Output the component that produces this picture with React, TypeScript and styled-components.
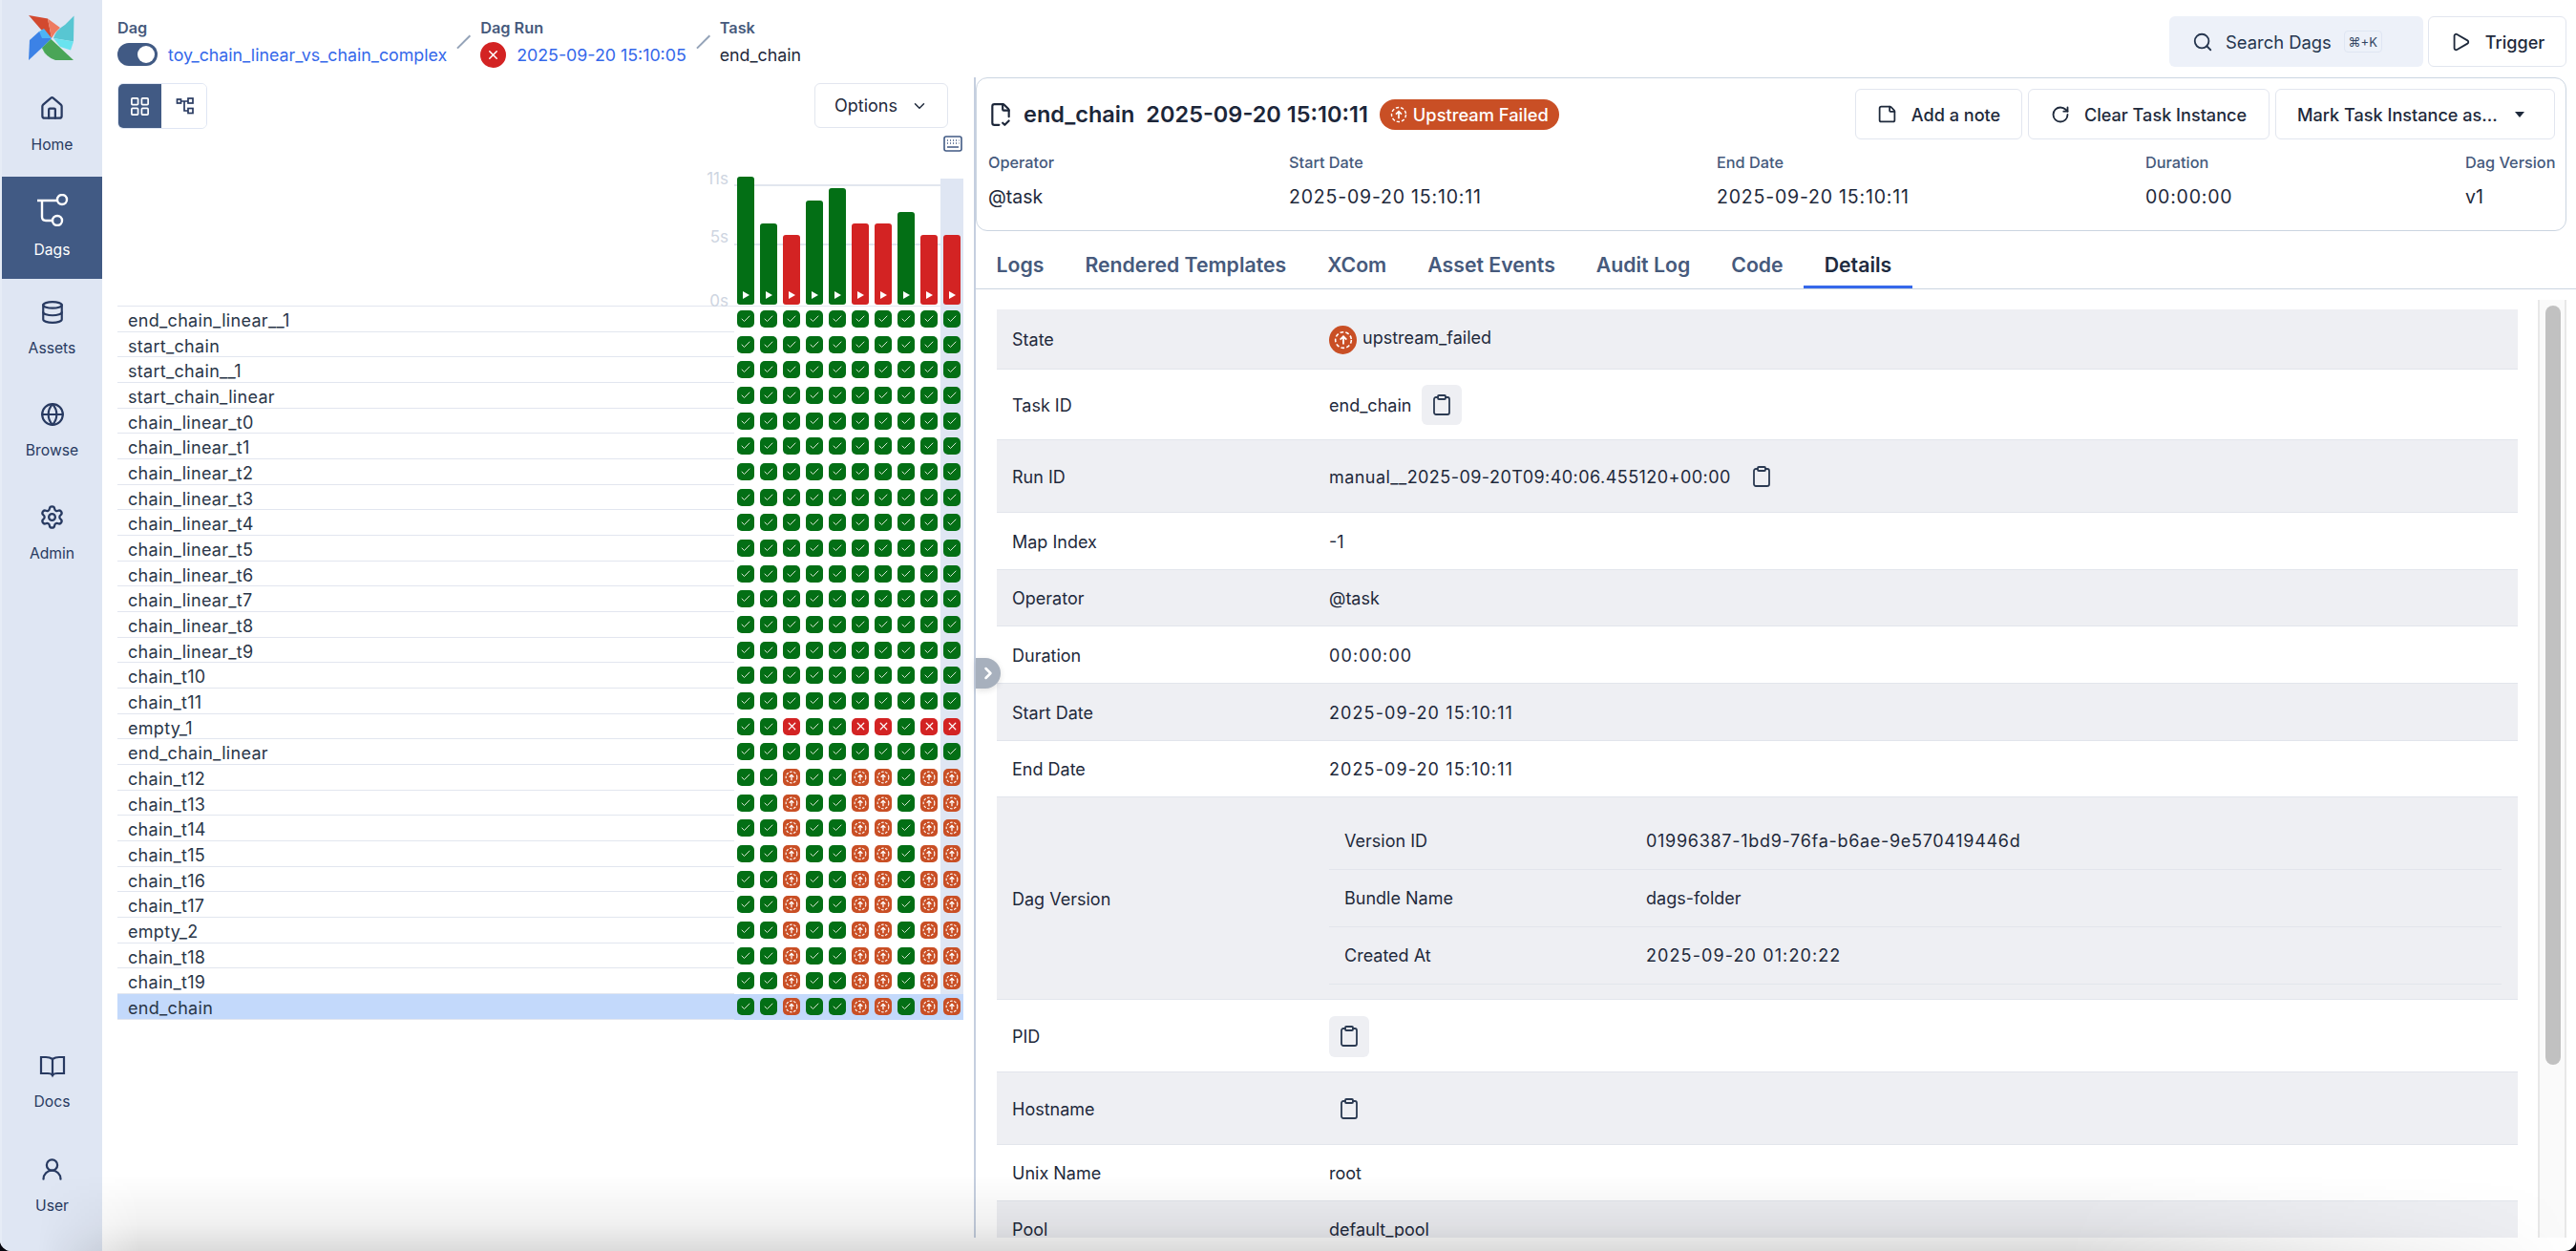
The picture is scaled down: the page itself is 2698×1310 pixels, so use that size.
import React from "react";
import styled, { createGlobalStyle } from "styled-components";
import {
  House, Database, Globe, Settings, UserRound, LayoutGrid, Search, Play, StickyNote,
  RotateCw, Clipboard, ChevronDown, ChevronRight, FileCheck2, X, Check,
} from "lucide-react";

const Global = createGlobalStyle`
  html, body { margin: 0; padding: 0; background: #07070f; }
  body { font-family: Inter, "Noto Sans", sans-serif; color: #1e293b; }
  * { box-sizing: border-box; }
`;

const Page = styled.div`
  position: relative; width: 2698px; height: 1310px; display: flex; overflow: hidden;
  background: #fff; border-radius: 0 0 12px 12px; font-size: 18px;
`;
const BottomShade = styled.div`
  position: absolute; left: 40px; right: 0; bottom: 0; height: 80px; pointer-events: none;
  background: linear-gradient(to top, rgba(0,0,0,.14), rgba(0,0,0,.06) 35%, rgba(0,0,0,0));
  -webkit-mask-image: linear-gradient(to right, transparent 0, #000 4%, #000 80%, transparent 100%);
  mask-image: linear-gradient(to right, transparent 0, #000 4%, #000 80%, transparent 100%);
`;

/* sidebar */
const Sidebar = styled.nav`
  width: 107px; flex: none; display: flex; flex-direction: column; background: #dfe6f3;
  border-left: 2px solid #e6ecf6; height: 100%;
`;
const LogoBox = styled.div`height: 78px; padding: 16px 0 0 28px;`;
const NavItem = styled.div<{ $active?: boolean }>`
  height: 107px; display: flex; flex-direction: column; align-items: center; justify-content: center; gap: 16px;
  padding-bottom: 3px;
  background: ${p => (p.$active ? "#415a84" : "transparent")};
  color: ${p => (p.$active ? "#fff" : "#283a61")};
  font-size: 15.7px; line-height: 18px;
`;
const NavSpacer = styled.div`flex: 1;`;
const SideEnd = styled.div`height: 14px;`;

/* main */
const Main = styled.div`flex: 1; min-width: 0; display: flex; flex-direction: column;`;
const Header = styled.header`
  height: 81px; flex: none; display: flex; align-items: flex-start; padding: 17px 10px 0 16px;
`;
const Crumbs = styled.div`flex: 1; display: flex; padding-top: 3px;`;
const Crumb = styled.div`display: flex; flex-direction: column; gap: 7px;`;
const CrumbLabel = styled.div`font-size: 16.3px; line-height: 18px; font-weight: 600; color: #465a7c;`;
const CrumbValue = styled.div`display: flex; align-items: center; gap: 11px; height: 24px; font-size: 17.8px; white-space: nowrap;`;
const CrumbLink = styled.span`color: #3568ea;`;
const Slash = styled.div`
  width: 19px; height: 1.5px; background: #94a3b8; transform: rotate(-45deg);
  margin: 23px 8px 0;
`;
const Toggle = styled.div`
  width: 42px; height: 24px; border-radius: 12px; background: #415a84; padding: 3px 3px 3px 21px;
`;
const Knob = styled.div`width: 18px; height: 18px; border-radius: 50%; background: #fff;`;
const FailDot = styled.div`
  width: 27px; height: 27px; border-radius: 50%; background: #d32323; color: #fff;
  display: flex; align-items: center; justify-content: center;
`;
const HeaderActions = styled.div`display: flex; gap: 5px;`;
const SearchBox = styled.div`
  width: 266px; height: 53px; background: #edf1f9; border-radius: 6px; display: flex; align-items: center;
  padding-left: 24px; gap: 13px; color: #26364f; font-size: 18.4px;
`;
const Kbd = styled.span`
  height: 23px; width: 40px; border: 1px solid #dfe6f3; border-radius: 4px; font-size: 13px;
  display: flex; align-items: center; justify-content: center; color: #334663;
`;
const Button = styled.button<{ $w?: number }>`
  height: 53px; width: ${p => (p.$w ? `${p.$w}px` : "auto")}; border: 1.5px solid #e2e6ef; border-radius: 6px; background: #fff;
  display: flex; align-items: center; justify-content: center; gap: 15px; padding: 0;
  font: 500 18.1px Inter, sans-serif; color: #1e293b;
`;

const Split = styled.div`flex: 1; min-height: 0; display: flex;`;
const LeftPane = styled.section`
  width: 913px; flex: none; padding: 6px 11px 0 16px; display: flex; flex-direction: column;
`;
const ToolRow = styled.div`display: flex; justify-content: space-between; height: 48px; padding-right: 16px;`;
const ViewToggle = styled.div`
  display: flex; width: 94px; height: 48px; border: 1.5px solid #dfe6f3; border-radius: 6px; overflow: hidden;
`;
const ViewBtn = styled.div<{ $on?: boolean }>`
  flex: 1; display: flex; align-items: center; justify-content: center;
  background: ${p => (p.$on ? "#415a84" : "#fff")}; color: ${p => (p.$on ? "#fff" : "#283a61")};
  border-right: ${p => (p.$on ? "2px solid #fff" : "none")};
`;
const OptionsBtn = styled(Button)`width: 140px; height: 47px; gap: 14px; font-weight: 400; font-size: 18px;`;
const KeyRow = styled.div`height: 27px; display: flex; justify-content: flex-end; padding: 7px 1px 0 0; color: #415a84;`;

const Chart = styled.div`
  position: relative; height: 159px; display: flex; justify-content: flex-end; align-items: flex-end;
  border-bottom: 1.5px solid #e2e6ef;
`;
const GridLine = styled.div<{ $y: number }>`
  position: absolute; left: 646px; width: 216px; top: ${p => p.$y}px; height: 1.5px; background: #e2e6ef;
`;
const AxisLabel = styled.div<{ $y: number }>`
  position: absolute; right: 246px; top: ${p => p.$y}px; color: #ced5e1; font-size: 17px; line-height: 20px;
`;
const BarCol = styled.div<{ $hl?: boolean }>`
  position: relative; width: 24px; height: 133px; padding: 0 3px 1px; display: flex; align-items: flex-end;
  background: ${p => (p.$hl ? "#dfe6f3" : "transparent")};
`;
const Bar = styled.div<{ $fail?: boolean; $h: number }>`
  width: 18px; flex: none; height: ${p => p.$h}px; border-radius: 3px; background: ${p => (p.$fail ? "#d32323" : "#036f15")};
  display: flex; align-items: flex-end; justify-content: center; padding-bottom: 6px;
`;
const PlayMark = styled.div`
  width: 0; height: 0; border-left: 7px solid #fff; border-top: 4px solid transparent; border-bottom: 4px solid transparent;
`;

const Tree = styled.div`display: flex; flex-direction: column;`;
const Row = styled.div<{ $sel?: boolean }>`
  height: 26.68px; display: flex; align-items: stretch;
  background: ${p => (p.$sel ? "#c3d9fb" : "transparent")};
`;
const RowName = styled.div`
  flex: 1; padding-left: 11px; font-size: 18px; line-height: 30px; letter-spacing: 0.3px; white-space: nowrap;
  color: #2a3648; border-bottom: 1.5px solid #e2e6ef; overflow: hidden;
`;
const Cell = styled.div<{ $hl?: boolean }>`
  width: 24px; flex: none; padding: 4px 3px 0; background: ${p => (p.$hl ? "#dfe6f3" : "transparent")};
`;
const SelCell = styled(Cell)`background: transparent;`;
const Square = styled.div<{ $s: string }>`
  width: 18px; height: 18px; border-radius: 5px; display: flex; align-items: center; justify-content: center;
  color: ${p => (p.$s === "ok" ? "#d5e7d6" : "#fff")};
  background: ${p => (p.$s === "ok" ? "#036f15" : p.$s === "fail" ? "#d32323" : "#c94f25")};
`;

const RightPane = styled.section`
  position: relative; flex: 1; min-width: 0; height: 1215px; border-left: 2px solid #c5cfdf; padding-right: 10px;
  display: flex; flex-direction: column;
`;
const Handle = styled.div`
  position: absolute; left: 0; top: 608px; width: 26px; height: 32px; background: #a7b0bd; border-radius: 0 16px 16px 0;
  color: #fff; display: flex; align-items: center; justify-content: center; box-shadow: 0 2px 6px rgba(0,0,0,.12);
`;
const Card = styled.div`
  height: 161px; flex: none; border: 1.5px solid #cbd5e1; border-radius: 12px; padding: 11px 11px 0 12px;
`;
const CardTop = styled.div`display: flex; align-items: center; height: 53px;`;
const Title = styled.div`
  display: flex; align-items: center; gap: 11px; font-size: 23.5px; font-weight: 600; color: #1c2639; white-space: nowrap;
`;
const TitleDate = styled.span`margin-left: 1px;`;
const Badge = styled.span`
  height: 32px; padding: 0 11px; margin-left: 1px; border-radius: 16px; background: #c94f25; color: #fff;
  display: inline-flex; align-items: center; gap: 6px; font-size: 18.3px; font-weight: 500;
`;
const CardActions = styled.div`margin-left: auto; display: flex; gap: 6px;`;
const MarkBtn = styled(Button)`gap: 18px; justify-content: flex-start; padding-left: 22px;`;
const Caret = styled.span`
  width: 0; height: 0; border-top: 6px solid #1e293b; border-left: 5.5px solid transparent; border-right: 5.5px solid transparent;
`;
const Meta = styled.div`
  display: grid; grid-template-columns: 315px 448px 449px 335px auto; margin-top: 15px;
`;
const MetaItem = styled.div`display: flex; flex-direction: column; gap: 16px;`;
const MetaLabel = styled.div`font-size: 16.3px; line-height: 18px; font-weight: 500; color: #465a7c; white-space: nowrap;`;
const MetaValue = styled.div<{ $num?: boolean }>`
  font-size: 19.5px; line-height: 22px; color: #1e293b; white-space: nowrap;
  letter-spacing: ${p => (p.$num ? "0.8px" : "0")};
`;

const Tabs = styled.div`
  height: 61px; flex: none; display: flex; border-bottom: 1.5px solid #cbd5e1; margin-right: -10px;
`;
const Tab = styled.div<{ $on?: boolean }>`
  padding: 22px 21.5px 0; font-size: 21.25px; line-height: 26px; font-weight: 600; white-space: nowrap;
  color: ${p => (p.$on ? "#1e2b40" : "#465a7c")};
  box-shadow: ${p => (p.$on ? "inset 0 -3px 0 #3568ea" : "none")};
`;

const Body = styled.div`flex: 1; min-height: 0; display: flex; overflow: hidden; margin-right: -10px; padding: 21px 0 0 22px;`;
const Table = styled.div`width: 1593px; flex: none;`;
const TRow = styled.div<{ $h: number; $odd?: boolean }>`
  height: ${p => p.$h}px; display: flex; align-items: center; padding: 1.5px 0 0 16px;
  background: ${p => (p.$odd ? "#eeeff3" : "#fff")}; border-bottom: 1.5px solid #e2e5ec;
`;
const TLabel = styled.div`width: 332px; flex: none;`;
const TValue = styled.div`flex: 1; display: flex; align-items: center; min-width: 0; white-space: nowrap;`;
const Spaced = styled.span<{ $ls: number }>`letter-spacing: ${p => p.$ls}px;`;
const StateDot = styled.span`
  width: 29px; height: 30px; border-radius: 50%; background: #c94f25; color: #fff; margin-right: 6px;
  display: inline-flex; align-items: center; justify-content: center;
`;
const StateText = styled.span`position: relative; top: -2px;`;
const CopyBtn = styled.div<{ $fill?: boolean; $tall?: boolean }>`
  width: 42px; height: ${p => (p.$tall ? 43 : 42)}px; border-radius: 6px; color: #2b3a52;
  display: flex; align-items: center; justify-content: center; margin-left: 11px;
  background: ${p => (p.$fill ? "#eeeff3" : "transparent")};
`;
const BareCopyBtn = styled(CopyBtn)`margin-left: 0;`;
const Nested = styled.div`width: 1228px;`;
const NRow = styled.div`
  height: 60px; display: flex; align-items: center; padding-left: 16px; border-bottom: 1.5px solid #e2e5ec;
`;
const NLabel = styled.div`width: 316px; flex: none;`;
const Track = styled.div`
  width: 30px; margin-left: 21px; flex: none; height: calc(100% + 10px); margin-top: -10px;
  background: #fafafa; border-left: 2px solid #e8e8e8; border-right: 2px solid #e8e8e8; padding: 6px 5px 0 6px;
`;
const Thumb = styled.div`width: 16px; height: 795px; border-radius: 8px; background: #c1c1c1;`;

/* icons */
const Logo = () => (
  <svg width="48" height="48" viewBox="0 0 48 48">
    <path d="M0 0L20 3.5L24 24L13 15Z" fill="#d2492f" />
    <path d="M20 3.5L33 13Q27 18 24 24Z" fill="#ee7a60" />
    <path d="M47.5 0.5L47 27.5L26 24Q28 16 38 10Z" fill="#58c6d2" />
    <path d="M47 27.5L44 36.5L33 33L26 24Z" fill="#69e3ef" />
    <path d="M47 47L28 47Q18 44 14 34L23.5 25Z" fill="#4aa557" />
    <path d="M23.5 25L14 34L18 42L11 24Z" fill="#5ac86b" />
    <path d="M0 47L1 26L11 17L24 24L14 34Z" fill="#3c82e6" />
    <path d="M11 17L16 14L24 24L14 24Z" fill="#4db3f6" />
  </svg>
);
const DagsIcon = () => (
  <svg width="34" height="34" viewBox="0 0 34 34" fill="none" stroke="currentColor" strokeWidth="2.4">
    <circle cx="27" cy="6" r="5" />
    <circle cx="22" cy="28" r="5" />
    <path d="M1 7H22M6 7V24Q6 28 10 28H17" />
  </svg>
);
const BookIcon = () => (
  <svg width="28" height="24" viewBox="0 0 28 24" fill="none" stroke="currentColor" strokeWidth="2.2">
    <path d="M14 4Q11 2 7 2H2V19H9Q13 19 14 21Q15 19 19 19H26V2H21Q17 2 14 4ZM14 4V22" />
  </svg>
);
const GraphIcon = () => (
  <svg width="20" height="18" viewBox="0 0 20 18" fill="none" stroke="currentColor" strokeWidth="1.7">
    <rect x="1.5" y="2" width="4" height="4" />
    <rect x="13" y="1" width="5" height="5" />
    <rect x="13" y="11.5" width="5" height="5" />
    <path d="M5.5 4H13M9 4V14H13" />
  </svg>
);
const KeyboardIcon = () => (
  <svg width="20" height="17" viewBox="0 0 20 17" fill="none">
    <rect x="1" y="1" width="18" height="15" rx="2" stroke="currentColor" strokeWidth="1.6" />
    <path d="M4 5h1M7 5h1M10 5h1M13 5h1M16 5h.5M4 8h1M7 8h1M10 8h1M13 8h1M16 8h.5M4 12h12" stroke="currentColor" strokeWidth="1.5" />
  </svg>
);
const UpstreamIcon = ({ size }: { size: number }) => (
  <svg width={size} height={size} viewBox="0 0 24 24" fill="none" stroke="currentColor">
    <circle cx="12" cy="12" r="10" strokeWidth="1.9" strokeDasharray="4.5 2.6" />
    <path d="M12 17.5V8M8 11.5L12 7.5L16 11.5" strokeWidth="2.2" />
  </svg>
);

const names = [
  "end_chain_linear__1", "start_chain", "start_chain__1", "start_chain_linear",
  "chain_linear_t0", "chain_linear_t1", "chain_linear_t2", "chain_linear_t3", "chain_linear_t4",
  "chain_linear_t5", "chain_linear_t6", "chain_linear_t7", "chain_linear_t8", "chain_linear_t9",
  "chain_t10", "chain_t11", "empty_1", "end_chain_linear", "chain_t12", "chain_t13", "chain_t14",
  "chain_t15", "chain_t16", "chain_t17", "empty_2", "chain_t18", "chain_t19", "end_chain",
];
const failCols = [2, 5, 6, 8, 9];
const barH = [134, 85, 73, 109, 122, 85, 85, 97, 73, 73];
const cols = barH.map((_, i) => i);

const statusOf = (name: string, rowIdx: number, col: number) => {
  if (!failCols.includes(col)) return "ok";
  if (name === "empty_1") return "fail";
  return rowIdx > 17 ? "up" : "ok";
};

const StatusIcon = ({ s }: { s: string }) =>
  s === "ok" ? <Check size={12} strokeWidth={2} /> : s === "fail" ? <X size={13} strokeWidth={2.2} /> : <UpstreamIcon size={14} />;

const CopyIcon = () => <Clipboard size={24} strokeWidth={1.8} />;

export default function App() {
  return (
    <Page>
      <Global />
      <Sidebar>
        <LogoBox><Logo /></LogoBox>
        <NavItem><House size={27} strokeWidth={2} /><span>Home</span></NavItem>
        <NavItem $active><DagsIcon /><span>Dags</span></NavItem>
        <NavItem><Database size={26} strokeWidth={2} /><span>Assets</span></NavItem>
        <NavItem><Globe size={26} strokeWidth={2} /><span>Browse</span></NavItem>
        <NavItem><Settings size={27} strokeWidth={2} /><span>Admin</span></NavItem>
        <NavSpacer />
        <NavItem><BookIcon /><span>Docs</span></NavItem>
        <NavItem><UserRound size={27} strokeWidth={2} /><span>User</span></NavItem>
        <SideEnd />
      </Sidebar>
      <Main>
        <Header>
          <Crumbs>
            <Crumb>
              <CrumbLabel>Dag</CrumbLabel>
              <CrumbValue><Toggle><Knob /></Toggle><CrumbLink>toy_chain_linear_vs_chain_complex</CrumbLink></CrumbValue>
            </Crumb>
            <Slash />
            <Crumb>
              <CrumbLabel>Dag Run</CrumbLabel>
              <CrumbValue><FailDot><X size={15} strokeWidth={2.4} /></FailDot><CrumbLink>2025-09-20 15:10:05</CrumbLink></CrumbValue>
            </Crumb>
            <Slash />
            <Crumb>
              <CrumbLabel>Task</CrumbLabel>
              <CrumbValue>end_chain</CrumbValue>
            </Crumb>
          </Crumbs>
          <HeaderActions>
            <SearchBox><Search size={22} strokeWidth={2} /><span>Search Dags</span><Kbd>⌘+K</Kbd></SearchBox>
            <Button $w={145}><Play size={22} strokeWidth={2} />Trigger</Button>
          </HeaderActions>
        </Header>
        <Split>
          <LeftPane>
            <ToolRow>
              <ViewToggle>
                <ViewBtn $on><LayoutGrid size={23} strokeWidth={1.8} /></ViewBtn>
                <ViewBtn><GraphIcon /></ViewBtn>
              </ViewToggle>
              <OptionsBtn>Options<ChevronDown size={18} strokeWidth={2} /></OptionsBtn>
            </ToolRow>
            <KeyRow><KeyboardIcon /></KeyRow>
            <Chart>
              <AxisLabel $y={15}>11s</AxisLabel>
              <AxisLabel $y={76}>5s</AxisLabel>
              <AxisLabel $y={143}>0s</AxisLabel>
              <GridLine $y={31} />
              <GridLine $y={93} />
              {cols.map(i => (
                <BarCol key={i} $hl={i === 9}>
                  <Bar $fail={failCols.includes(i)} $h={barH[i]}><PlayMark /></Bar>
                </BarCol>
              ))}
            </Chart>
            <Tree>
              {names.map((n, r) => {
                const sel = n === "end_chain";
                return (
                  <Row key={n} $sel={sel}>
                    <RowName>{n}</RowName>
                    {cols.map(c => {
                      const s = statusOf(n, r, c);
                      const C = sel ? SelCell : Cell;
                      return (
                        <C key={c} $hl={c === 9}>
                          <Square $s={s}><StatusIcon s={s} /></Square>
                        </C>
                      );
                    })}
                  </Row>
                );
              })}
            </Tree>
          </LeftPane>
          <RightPane>
            <Handle><ChevronRight size={20} strokeWidth={3} /></Handle>
            <Card>
              <CardTop>
                <Title>
                  <FileCheck2 size={26} strokeWidth={2} />
                  <span>end_chain</span>
                  <TitleDate>2025-09-20 15:10:11</TitleDate>
                  <Badge><UpstreamIcon size={18} />Upstream Failed</Badge>
                </Title>
                <CardActions>
                  <Button $w={175}><StickyNote size={21} strokeWidth={2} />Add a note</Button>
                  <Button $w={253}><RotateCw size={20} strokeWidth={2.2} />Clear Task Instance</Button>
                  <MarkBtn $w={293}>Mark Task Instance as...<Caret /></MarkBtn>
                </CardActions>
              </CardTop>
              <Meta>
                <MetaItem><MetaLabel>Operator</MetaLabel><MetaValue>@task</MetaValue></MetaItem>
                <MetaItem><MetaLabel>Start Date</MetaLabel><MetaValue $num>2025-09-20 15:10:11</MetaValue></MetaItem>
                <MetaItem><MetaLabel>End Date</MetaLabel><MetaValue $num>2025-09-20 15:10:11</MetaValue></MetaItem>
                <MetaItem><MetaLabel>Duration</MetaLabel><MetaValue $num>00:00:00</MetaValue></MetaItem>
                <MetaItem><MetaLabel>Dag Version</MetaLabel><MetaValue>v1</MetaValue></MetaItem>
              </Meta>
            </Card>
            <Tabs>
              <Tab>Logs</Tab>
              <Tab>Rendered Templates</Tab>
              <Tab>XCom</Tab>
              <Tab>Asset Events</Tab>
              <Tab>Audit Log</Tab>
              <Tab>Code</Tab>
              <Tab $on>Details</Tab>
            </Tabs>
            <Body>
              <Table>
                <TRow $h={63} $odd><TLabel>State</TLabel><TValue><StateDot><UpstreamIcon size={20} /></StateDot><StateText>upstream_failed</StateText></TValue></TRow>
                <TRow $h={74}><TLabel>Task ID</TLabel><TValue>end_chain<CopyBtn $fill><CopyIcon /></CopyBtn></TValue></TRow>
                <TRow $h={76} $odd><TLabel>Run ID</TLabel><TValue><Spaced $ls={0.45}>manual__2025-09-20T09:40:06.455120+00:00</Spaced><CopyBtn><CopyIcon /></CopyBtn></TValue></TRow>
                <TRow $h={60}><TLabel>Map Index</TLabel><TValue>-1</TValue></TRow>
                <TRow $h={59} $odd><TLabel>Operator</TLabel><TValue>@task</TValue></TRow>
                <TRow $h={60}><TLabel>Duration</TLabel><TValue><Spaced $ls={1.1}>00:00:00</Spaced></TValue></TRow>
                <TRow $h={60} $odd><TLabel>Start Date</TLabel><TValue><Spaced $ls={1.1}>2025-09-20 15:10:11</Spaced></TValue></TRow>
                <TRow $h={59}><TLabel>End Date</TLabel><TValue><Spaced $ls={1.1}>2025-09-20 15:10:11</Spaced></TValue></TRow>
                <TRow $h={212} $odd>
                  <TLabel>Dag Version</TLabel>
                  <Nested>
                    <NRow><NLabel>Version ID</NLabel><Spaced $ls={0.7}>01996387-1bd9-76fa-b6ae-9e570419446d</Spaced></NRow>
                    <NRow><NLabel>Bundle Name</NLabel><span>dags-folder</span></NRow>
                    <NRow><NLabel>Created At</NLabel><Spaced $ls={1.1}>2025-09-20 01:20:22</Spaced></NRow>
                  </Nested>
                </TRow>
                <TRow $h={76}><TLabel>PID</TLabel><TValue><BareCopyBtn $fill $tall><CopyIcon /></BareCopyBtn></TValue></TRow>
                <TRow $h={76} $odd><TLabel>Hostname</TLabel><TValue><BareCopyBtn $tall><CopyIcon /></BareCopyBtn></TValue></TRow>
                <TRow $h={59}><TLabel>Unix Name</TLabel><TValue>root</TValue></TRow>
                <TRow $h={59} $odd><TLabel>Pool</TLabel><TValue>default_pool</TValue></TRow>
              </Table>
              <Track><Thumb /></Track>
            </Body>
          </RightPane>
        </Split>
      </Main>
      <BottomShade />
    </Page>
  );
}
